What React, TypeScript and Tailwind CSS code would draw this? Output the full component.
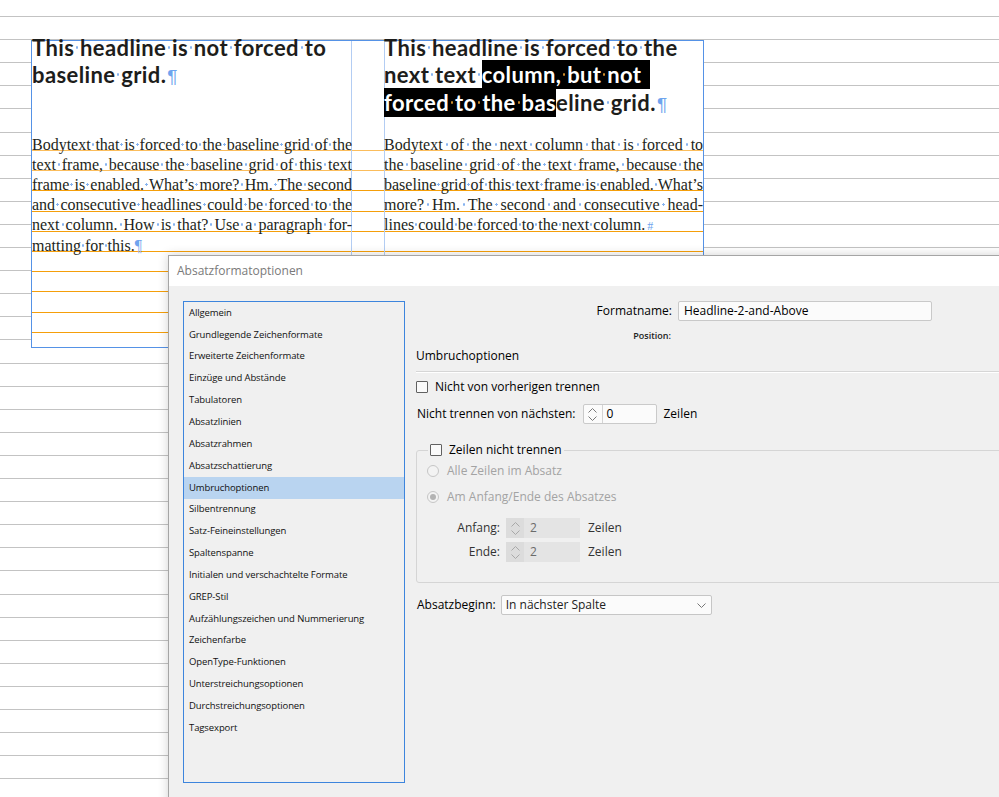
import React from 'react';

// pasteboard grid + text frame baseline grid
const GRID_Y = Array.from({ length: 34 }, (_, i) => Math.round(16 + i * 23.1));
const BASELINES = Array.from({ length: 10 }, (_, i) => Math.round(109 + i * 20.2));

const LIST_ITEMS = [
  'Allgemein',
  'Grundlegende Zeichenformate',
  'Erweiterte Zeichenformate',
  'Einzüge und Abstände',
  'Tabulatoren',
  'Absatzlinien',
  'Absatzrahmen',
  'Absatzschattierung',
  'Umbruchoptionen',
  'Silbentrennung',
  'Satz-Feineinstellungen',
  'Spaltenspanne',
  'Initialen und verschachtelte Formate',
  'GREP-Stil',
  'Aufzählungszeichen und Nummerierung',
  'Zeichenfarbe',
  'OpenType-Funktionen',
  'Unterstreichungsoptionen',
  'Durchstreichungsoptionen',
  'Tagsexport',
];

// hidden-character space: a plain space with a small blue dot in it
function Dot({ inverse }: { inverse?: boolean }) {
  return inverse ? (
    <span className="bg-[radial-gradient(circle,#c98a2a_1px,transparent_1.4px)]"> </span>
  ) : (
    <span className="bg-[radial-gradient(circle,#86b3ef_1px,transparent_1.4px)]"> </span>
  );
}

function Words({ text, inverse }: { text: string; inverse?: boolean }) {
  const parts = text.split(' ');
  return (
    <>
      {parts.map((w, i) => (
        <React.Fragment key={i}>
          {i > 0 && <Dot inverse={inverse} />}
          {w}
        </React.Fragment>
      ))}
    </>
  );
}

function Pilcrow({ big }: { big?: boolean }) {
  return big ? (
    <span className="ml-[1px] font-['Liberation_Sans',sans-serif] font-normal text-[19px] leading-[1] text-[#6ea4ee]">¶</span>
  ) : (
    <span className="font-normal leading-[1] text-[#6ea4ee]">¶</span>
  );
}

function Line({ text, last, children }: { text: string; last?: boolean; children?: React.ReactNode }) {
  return (
    <div className={last ? 'whitespace-nowrap text-left' : 'whitespace-nowrap text-justify [text-align-last:justify]'}>
      <Words text={text} />
      {children}
    </div>
  );
}

function Checkbox() {
  return <div className="w-[12px] h-[12px] shrink-0 border border-[#616161] rounded-[1px] bg-[#fafafa]" />;
}

function Radio({ checked }: { checked?: boolean }) {
  return (
    <div className="w-[12px] h-[12px] shrink-0 rounded-full border border-[#c6c6c6] bg-[#f3f3f3] flex items-center justify-center">
      {checked && <div className="w-[6px] h-[6px] rounded-full bg-[#b3b3b3]" />}
    </div>
  );
}

function Arrows({ color }: { color: string }) {
  return (
    <div className="flex flex-col items-center gap-[3px]">
      <svg width="9" height="5" viewBox="0 0 9 5">
        <path d="M0.5 4.5 L4.5 0.5 L8.5 4.5" fill="none" stroke={color} strokeWidth="1" />
      </svg>
      <svg width="9" height="5" viewBox="0 0 9 5">
        <path d="M0.5 0.5 L4.5 4.5 L8.5 0.5" fill="none" stroke={color} strokeWidth="1" />
      </svg>
    </div>
  );
}

function Spinner({ value, disabled }: { value: string; disabled?: boolean }) {
  if (disabled) {
    return (
      <div className="flex h-[20px] w-[74px] bg-[#e4e4e4]">
        <div className="w-[18px] flex items-center justify-center bg-[#dcdcdc]">
          <Arrows color="#a8a8a8" />
        </div>
        <div className="pl-[6px] flex items-center text-[#6b6b6b]">{value}</div>
      </div>
    );
  }
  return (
    <div className="flex h-[20px] w-[74px] border border-[#cacaca] rounded-[2px] bg-[#fbfbfb]">
      <div className="w-[19px] flex items-center justify-center border-r border-[#d4d4d4]">
        <Arrows color="#7a7a7a" />
      </div>
      <div className="pl-[4px] flex items-center">{value}</div>
    </div>
  );
}

export default function App() {
  return (
    <div className="relative w-[999px] h-[797px] overflow-hidden bg-white">
      {/* Pasteboard baseline grid */}
      <svg className="absolute inset-0" width="999" height="797">
        {GRID_Y.map((y) => (
          <rect key={y} x="0" y={y} width="999" height="1" fill="#c3c3c3" />
        ))}
      </svg>

      {/* Text frame with two columns */}
      <div className="relative ml-[31px] mt-[40px] w-[673px] h-[308px] border border-[#5592e6] bg-white">
        <svg className="absolute left-0 top-0" width="671" height="306">
          {BASELINES.map((y, i) => (
            <rect key={i} x="0" y={y} width="671" height="1" fill={i < 2 ? '#fbbd5c' : '#f59f0a'} />
          ))}
          <rect x="319" y="0" width="1" height="306" fill="#b3cdf3" />
          <rect x="352" y="0" width="1" height="306" fill="#b3cdf3" />
        </svg>

        <div className="relative flex">
          {/* Left column */}
          <div className="w-[320px]">
            <div className="mt-[-7.5px] font-['Lato',sans-serif] font-bold text-[22px] tracking-[0.4px] leading-[27.5px] text-[#1d1d1b] whitespace-nowrap">
              <div>
                <Words text="This headline is not forced to" />
              </div>
              <div>
                <Words text="baseline grid." />
                <Pilcrow big />
              </div>
            </div>
            <div className="mt-[46px] font-['Liberation_Serif',serif] text-[16px] leading-[20.2px] text-[#231f20]">
              <Line text="Bodytext that is forced to the baseline grid of the" />
              <Line text="text frame, because the baseline grid of this text" />
              <Line text="frame is enabled. What’s more? Hm. The second" />
              <Line text="and consecutive headlines could be forced to the" />
              <Line text="next column. How is that? Use a paragraph for-" />
              <Line text="matting for this." last>
                <Pilcrow />
              </Line>
            </div>
          </div>

          <div className="w-[32px]" />

          {/* Right column */}
          <div className="w-[319px]">
            <div className="mt-[-7.5px] font-['Lato',sans-serif] font-bold text-[22px] tracking-[0.4px] leading-[27.5px] text-[#1d1d1b] whitespace-nowrap">
              <div>
                <Words text="This headline is forced to the" />
              </div>
              <div>
                <Words text="next text" />
                <Dot />
                <span className="bg-black text-white py-[1px] pr-[9px]">
                  <Words text="column, but not" inverse />
                </span>
              </div>
              <div>
                <span className="bg-black text-white py-[1px]">
                  <Words text="forced to the bas" inverse />
                </span>
                eline
                <Dot />
                grid.
                <Pilcrow big />
              </div>
            </div>
            <div className="mt-[18.5px] font-['Liberation_Serif',serif] text-[16px] leading-[20.2px] text-[#231f20]">
              <Line text="Bodytext of the next column that is forced to" />
              <Line text="the baseline grid of the text frame, because the" />
              <Line text="baseline grid of this text frame is enabled. What’s" />
              <Line text="more? Hm. The second and consecutive head-" />
              <Line text="lines could be forced to the next column." last>
                <span className="ml-[2px] text-[12px] leading-[1] text-[#6ea4ee]">#</span>
              </Line>
            </div>
          </div>
        </div>
      </div>

      {/* Paragraph style options dialog */}
      <div className="absolute left-[168px] top-[255px] w-[840px] h-[560px] border-l border-t border-[#a5a5a5] bg-[#f0f0f0] shadow-[0_0_10px_rgba(0,0,0,0.18)] font-['Open_Sans',sans-serif] text-black">
        <div className="h-[30px] bg-white flex items-center pl-[8px] text-[12px] text-[#7a7a7a]">Absatzformatoptionen</div>

        <div className="flex pl-[14px] pt-[15px]">
          {/* Category list */}
          <div className="w-[222px] h-[482px] shrink-0 border border-[#3d85dd] bg-[#f0f0f0]">
            {LIST_ITEMS.map((item) => (
              <div
                key={item}
                className={
                  item === 'Umbruchoptionen'
                    ? 'h-[21.85px] flex items-center pl-[5px] text-[9.5px] tracking-[-0.1px] text-[#111] bg-[#b9d4f0]'
                    : 'h-[21.85px] flex items-center pl-[5px] text-[9.5px] tracking-[-0.1px] text-[#111]'
                }
              >
                {item}
              </div>
            ))}
          </div>

          {/* Settings panel */}
          <div className="ml-[11px] shrink-0 flex flex-col text-[12px]">
            <div className="w-[516px] h-[20px] flex items-center justify-end">
              <span className="mr-[6px]">Formatname:</span>
              <div className="w-[254px] h-[20px] border border-[#c9c9c9] rounded-[2px] bg-[#fbfbfb] flex items-center pl-[5px]">
                Headline-2-and-Above
              </div>
            </div>
            <div className="mt-[8px] h-[14px] w-[255px] text-right text-[9px] font-semibold leading-[14px] text-[#222]">
              Position:
            </div>
            <div className="mt-[5px] h-[16px] leading-[16px]">Umbruchoptionen</div>
            <div className="mt-[7px] w-[600px] h-[2px] border-t border-[#d6d6d6] border-b border-b-white" />

            <div className="mt-[6px] h-[16px] flex items-center gap-[7px]">
              <Checkbox />
              <span>Nicht von vorherigen trennen</span>
            </div>

            <div className="mt-[9px] h-[20px] flex items-center">
              <span className="ml-[1px] mr-[7px]">Nicht trennen von nächsten:</span>
              <Spinner value="0" />
              <span className="ml-[7px]">Zeilen</span>
            </div>

            <fieldset className="mt-[18px] w-[620px] border border-[#d5d5d5] rounded-[3px]">
              <legend className="ml-[11px] px-[2px] h-[16px] flex items-center gap-[7px]">
                <Checkbox />
                <span>Zeilen nicht trennen</span>
              </legend>
              <div className="pl-[10px] pb-[20px] flex flex-col">
                <div className="mt-[5px] h-[16px] flex items-center gap-[8px] text-[#a3a3a3]">
                  <Radio />
                  <span>Alle Zeilen im Absatz</span>
                </div>
                <div className="mt-[10px] h-[16px] flex items-center gap-[8px] text-[#a3a3a3]">
                  <Radio checked />
                  <span>Am Anfang/Ende des Absatzes</span>
                </div>
                <div className="mt-[13px] h-[20px] flex items-center -ml-[10px]">
                  <span className="w-[83px] text-right text-[#333]">Anfang:</span>
                  <div className="ml-[6px]">
                    <Spinner value="2" disabled />
                  </div>
                  <span className="ml-[8px] text-[#333]">Zeilen</span>
                </div>
                <div className="mt-[4px] h-[20px] flex items-center -ml-[10px]">
                  <span className="w-[83px] text-right text-[#333]">Ende:</span>
                  <div className="ml-[6px]">
                    <Spinner value="2" disabled />
                  </div>
                  <span className="ml-[8px] text-[#333]">Zeilen</span>
                </div>
              </div>
            </fieldset>

            <div className="mt-[12px] h-[20px] flex items-center">
              <span className="ml-[1px]">Absatzbeginn:</span>
              <div className="ml-[5px] w-[211px] h-[20px] border border-[#c6c6c6] rounded-[2px] bg-[#fbfbfb] flex items-center justify-between pl-[4px] pr-[5px]">
                <span className="text-[#222]">In nächster Spalte</span>
                <svg width="9" height="5" viewBox="0 0 9 5">
                  <path d="M0.5 0.5 L4.5 4.5 L8.5 0.5" fill="none" stroke="#777" strokeWidth="1" />
                </svg>
              </div>
            </div>
          </div>
        </div>
      </div>
    </div>
  );
}
